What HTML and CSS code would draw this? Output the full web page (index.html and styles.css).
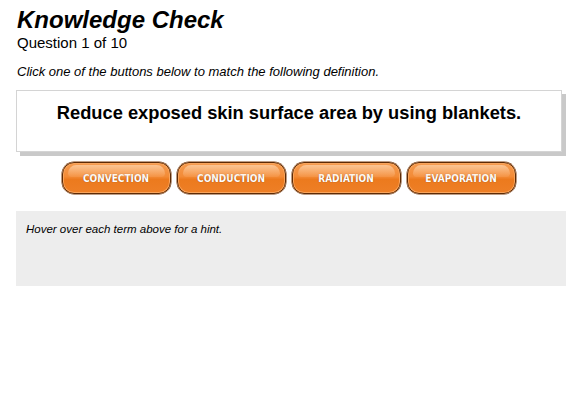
FILE: index.html
```html
<!DOCTYPE html>
<html lang="en">
<head>
<meta charset="utf-8">
<title>Knowledge Check</title>
<link rel="stylesheet" href="styles.css">
</head>
<body>
<div class="page">
  <h1 class="title">Knowledge Check</h1>
  <div class="counter">Question 1 of 10</div>
  <p class="instruction">Click one of the buttons below to match the following definition.</p>
  <div class="definition">Reduce exposed skin surface area by using blankets.</div>
  <div class="choices">
    <button class="choice">CONVECTION</button>
    <button class="choice">CONDUCTION</button>
    <button class="choice">RADIATION</button>
    <button class="choice">EVAPORATION</button>
  </div>
  <div class="hint">Hover over each term above for a hint.</div>
</div>
</body>
</html>
```

FILE: styles.css
```css
html, body {
  margin: 0;
  padding: 0;
  background: #ffffff;
}

body {
  font-family: "Liberation Sans", Arial, sans-serif;
  color: #000;
}

.page {
  width: 550px;
  margin-left: 16px;
  padding-top: 6px;
}

.title {
  margin: 0;
  font-size: 24px;
  line-height: 28px;
  font-weight: bold;
  font-style: italic;
  padding-left: 1px;
}

.counter {
  font-size: 15px;
  line-height: 18px;
  padding-left: 1px;
}

.instruction {
  margin: 12px 0 0 0;
  font-size: 13px;
  line-height: 15px;
  font-style: italic;
  padding-left: 1px;
}

.definition {
  margin-top: 11px;
  width: 544px;
  height: 49px;
  padding-top: 11px;
  border: 1px solid #d4d4d4;
  box-shadow: 4px 4px 0 #c9c9c9;
  text-align: center;
  font-size: 18.3px;
  line-height: 22px;
  font-weight: bold;
}

.choices {
  margin-top: 10px;
  padding-right: 5px;
  display: flex;
  justify-content: center;
  gap: 6px;
}

.choice {
  position: relative;
  width: 109px;
  height: 32px;
  padding: 0;
  border: 1px solid #5c2a05;
  border-radius: 12px;
  background: linear-gradient(#f59b50 0%, #f38b36 45%, #ec7a1e 55%, #ee7f26 100%);
  box-shadow: 0 0 0 0.5px #7a3a0c, inset 0 0 0 1px #f8a45c;
  color: #fff;
  font-family: "DejaVu Sans Condensed", "DejaVu Sans", sans-serif;
  font-stretch: condensed;
  font-size: 10px;
  font-weight: bold;
  text-shadow: 0 0 1px rgba(110, 45, 0, 0.8);
  cursor: pointer;
  overflow: hidden;
}

.choice::before {
  content: "";
  position: absolute;
  left: 5px;
  right: 5px;
  top: 2px;
  height: 12px;
  border-radius: 9px 9px 4px 4px;
  background: linear-gradient(rgba(255, 220, 185, 0.65), rgba(255, 190, 140, 0.15));
}

.hint {
  margin-top: 17px;
  height: 64px;
  padding: 11px 10px 0 10px;
  background: #ededed;
  font-size: 11.5px;
  line-height: 14px;
  font-style: italic;
}
```
